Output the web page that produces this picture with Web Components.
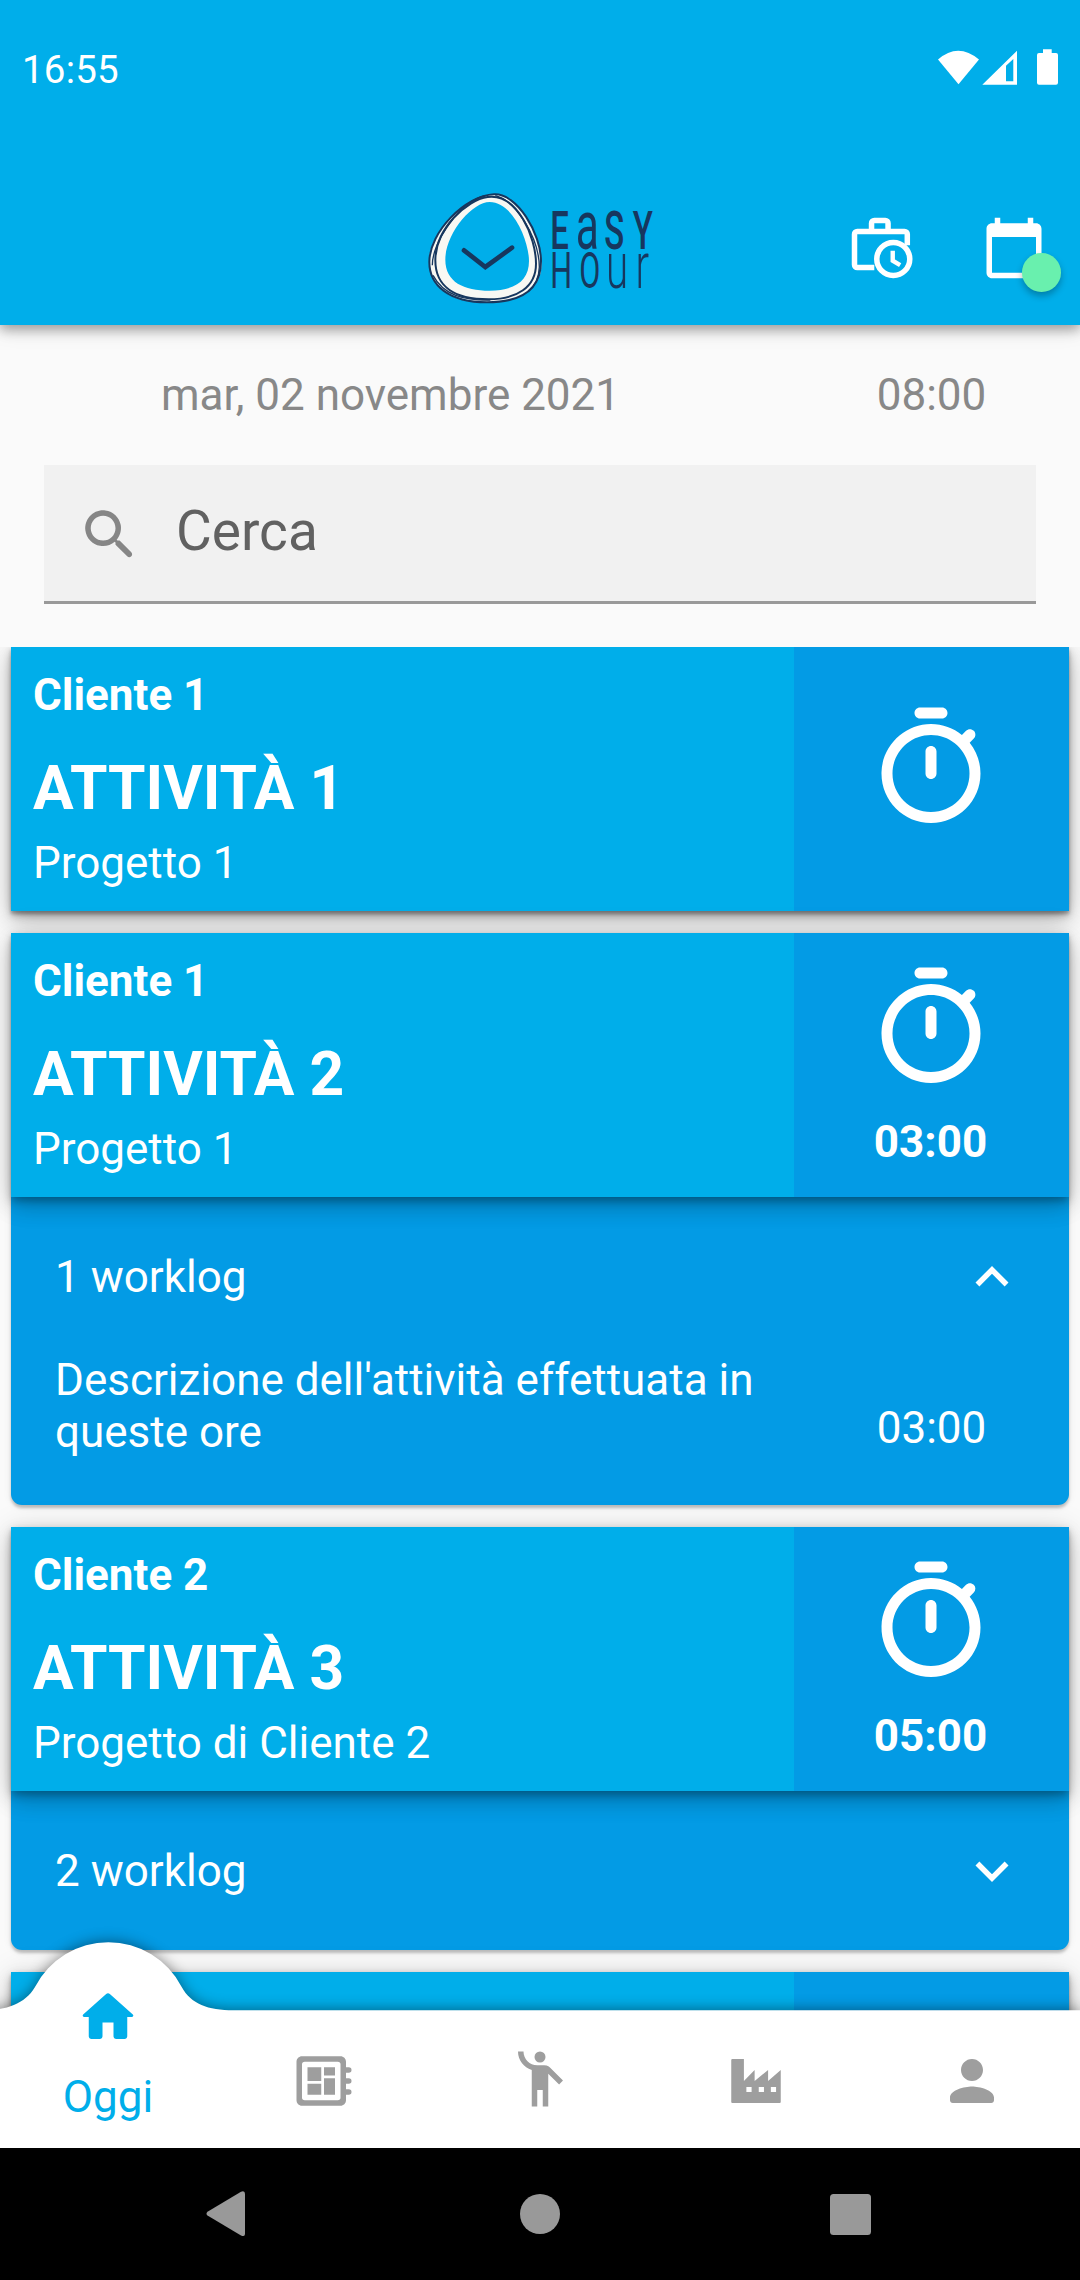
<!DOCTYPE html>
<html lang="it">
<head>
<meta charset="utf-8">
<title>EasyHour</title>
<style>
html,body{margin:0;padding:0}
body{width:1080px;height:2280px;overflow:hidden;background:#fafafa;font-family:Roboto,"Liberation Sans",sans-serif;font-size:44px;line-height:52px}
</style>
</head>
<body>
<easy-app></easy-app>
<script>
const ICONS = {
  timer: '<path d="M14 1h-4c-.55 0-1 .45-1 1s.45 1 1 1h4c.55 0 1-.45 1-1s-.45-1-1-1zm-2 13c.55 0 1-.45 1-1V9c0-.55-.45-1-1-1s-1 .45-1 1v4c0 .55.45 1 1 1zm7.03-6.61l.75-.75c.38-.38.39-1.01 0-1.4l-.01-.01c-.39-.39-1.01-.38-1.4 0l-.75.75C16.07 4.74 14.12 4 12 4c-4.8 0-8.88 3.96-9 8.76C2.87 17.84 6.94 22 12 22c4.98 0 9-4.03 9-9 0-2.12-.74-4.07-1.97-5.61zM12 20c-3.87 0-7-3.13-7-7s3.13-7 7-7 7 3.13 7 7-3.13 7-7 7z"/>',
  search: '<path d="M15.5 14h-.79l-.28-.27c1.2-1.4 1.82-3.31 1.48-5.34-.47-2.78-2.79-5-5.59-5.34-4.23-.52-7.79 3.04-7.27 7.27.34 2.8 2.56 5.12 5.34 5.59 2.03.34 3.94-.28 5.34-1.48l.27.28v.79l4.25 4.25c.41.41 1.08.41 1.49 0 .41-.41.41-1.08 0-1.49L15.5 14zm-6 0C7.01 14 5 11.99 5 9.5S7.01 5 9.5 5 14 7.01 14 9.5 11.99 14 9.5 14z"/>',
  up: '<path d="M12 8l-6 6 1.41 1.41L12 10.83l4.59 4.58L18 14z"/>',
  down: '<path d="M16.59 8.59L12 13.17 7.41 8.59 6 10l6 6 6-6z"/>',
  briefcase: '<path fill="none" stroke="currentColor" stroke-width="2" d="M9.2 19.1H3a1 1 0 0 1-1-1V7a1 1 0 0 1 1-1h17.2a1 1 0 0 1 1 1v4M8.2 6V3a1 1 0 0 1 1-1H13.2a1 1 0 0 1 1 1V6"/><circle cx="16.1" cy="16" r="6" fill="none" stroke="currentColor" stroke-width="2"/><path fill="none" stroke="currentColor" stroke-width="1.6" d="M15.9 13v3.6l2.7 1.6"/>',
  calendar: '<path d="M20 3h-1V1h-2v2H7V1H5v2H4c-1.1 0-2 .9-2 2v16c0 1.1.9 2 2 2h16c1.1 0 2-.9 2-2V5c0-1.1-.9-2-2-2zm0 18H4V8h16v13z"/>',
  home: '<path d="M10 19v-5h4v5c0 .55.45 1 1 1h3c.55 0 1-.45 1-1v-7h1.7c.46 0 .68-.57.33-.87L12.67 3.6c-.38-.34-.96-.34-1.34 0l-8.36 7.53c-.34.3-.13.87.33.87H5v7c0 .55.45 1 1 1h3c.55 0 1-.45 1-1z"/>',
  board: '<path fill-rule="evenodd" d="M4 3h14c1.1 0 2 .9 2 2v2h1a1 1 0 0 1 0 2h-1v2h1a1 1 0 0 1 0 2h-1v2h1a1 1 0 0 1 0 2h-1v2c0 1.1-.9 2-2 2H4c-1.1 0-2-.9-2-2V5c0-1.1.9-2 2-2zM5 5a1 1 0 0 0-1 1v12a1 1 0 0 0 1 1h12a1 1 0 0 0 1-1V6a1 1 0 0 0-1-1z"/><path d="M6 7h5v5H6zM6 13h5v4H6zM12 7h4v3h-4zM12 11h4v6h-4z"/>',
  people: '<circle cx="12" cy="4" r="2"/><path d="M15.89 8.11C15.5 7.72 14.83 7 13.53 7h-2.54C8.24 6.99 6 4.75 6 2H4c0 3.16 2.11 5.84 5 6.71V22h2v-6h2v6h2V10.05L18.95 14l1.41-1.41z"/>',
  factory: '<path fill-rule="evenodd" d="M3.4 4h4.2v8l3.9-4v4l4.9-4v4L21 8v11.6a.4.4 0 0 1-.4.4H3.4a.4.4 0 0 1-.4-.4V4.4a.4.4 0 0 1 .4-.4zM8.5 14.2v1.8h1.9v-1.8zM13 14.2v1.8h1.9v-1.8zM17.4 14.2v1.8h1.9v-1.8z"/>',
  person: '<path d="M12 12c2.21 0 4-1.79 4-4s-1.79-4-4-4-4 1.79-4 4 1.79 4 4 4zm0 2c-2.67 0-8 1.34-8 4v1c0 .55.45 1 1 1h14c.55 0 1-.45 1-1v-1c0-2.66-5.33-4-8-4z"/>'
};

function define(name, render) {
  customElements.define(name, class extends HTMLElement {
    connectedCallback() {
      if (this.shadowRoot) return;
      const t = document.createElement('template');
      t.innerHTML = render(this);
      this.attachShadow({mode: 'open'}).appendChild(t.content.cloneNode(true));
    }
  });
}

define('md-icon', el => `<style>:host{display:block;flex:none;width:${el.getAttribute('size') || 66}px;height:${el.getAttribute('size') || 66}px}svg{display:block}</style>
<svg width="100%" height="100%" viewBox="0 0 24 24" fill="currentColor">${ICONS[el.getAttribute('name')]}</svg>`);

define('status-bar', () => `<style>
:host{display:flex;height:138px;box-sizing:border-box;padding:44px 22px 0 22px;color:#fff;font-size:38.5px;line-height:52px;justify-content:space-between}
span{letter-spacing:.2px}svg{display:block;margin-top:4px}</style>
<span>16:55</span>
<svg width="122" height="38" viewBox="0 0 122 38" fill="#fff">
<path d="M2 11.5Q22 -6 43 11.5L22.5 36.3z"/>
<path fill-rule="evenodd" d="M46.3 36.7L81 2.7v34zM70 17.8v15.5h7.3V11z"/>
<path d="M107 1.3h8.7V5h4.3a2 2 0 0 1 2 2v27.7a2 2 0 0 1-2 2h-17a2 2 0 0 1-2-2V7a2 2 0 0 1 2-2h4z"/>
</svg>`);

define('easy-logo', () => `<style>:host{display:block;width:228px;height:114px}svg{display:block;overflow:visible}text{font-family:Roboto,sans-serif;fill:#17375e}</style>
<svg width="228" height="114" viewBox="80 62 684 342">
<path fill="#f8f8f3" fill-rule="evenodd" d="M278 71C350 66 424 192 424 278C424 350 372 397 255 397C145 397 86 345 86 272C86 185 200 76 278 71zM268 95C215 95 135 190 135 268C135 335 190 361 268 361C345 361 386 330 386 272C386 215 340 95 268 95z"/>
<g fill="none" stroke="#17375e">
<path stroke-width="6" d="M281 72C350 68 422 190 422 272C422 345 378 396 260 396C145 396 87 345 87 275C87 185 195 76 281 72z"/>
<path stroke-width="6" d="M262 80C350 68 407 200 407 280C407 350 350 387 265 387C165 387 105 350 105 270C105 175 200 88 262 80z"/>
<path stroke-width="4" d="M285 76C345 90 416 200 417 290C416 325 402 348 385 362M96 285C95 215 180 90 255 76M98 315C130 375 190 390 270 389"/>
<path stroke-width="14" stroke-linecap="round" d="M191 240L255 290L335 232"/>
</g>
<g transform="scale(.62 1)">
<text y="235" font-size="159" font-weight="500"><tspan x="726">E</tspan><tspan x="849" font-size="206" font-weight="400">a</tspan><tspan x="987">S</tspan><tspan x="1125">Y</tspan></text>
<text y="352" font-size="148" font-weight="400"><tspan x="726">H</tspan><tspan x="866">O</tspan><tspan x="995" font-size="195" font-weight="300">u</tspan><tspan x="1138" font-size="195" font-weight="300">r</tspan></text>
</g>
</svg>`);

define('app-header', () => `<style>
:host{display:block;position:relative;z-index:2;height:325px;background:#00aeea;box-shadow:0 5px 11px rgba(0,0,0,.3),0 2px 22px rgba(0,0,0,.14)}
.bar{display:flex;height:154px;align-items:center;margin-top:33px;padding-left:427px;color:#fff}
.work{margin-left:193.5px}.cal{position:relative;margin-left:66px}
.dot{position:absolute;left:41.5px;top:38px;width:38.5px;height:38.5px;border-radius:50%;background:#69f0ae;box-shadow:0 4px 7px rgba(0,0,0,.28)}</style>
<status-bar></status-bar>
<div class="bar"><easy-logo></easy-logo><md-icon class="work" name="briefcase"></md-icon><div class="cal"><md-icon name="calendar"></md-icon><div class="dot"></div></div></div>`);

define('day-row', () => `<style>:host{display:flex;height:140px;align-items:center;color:#888}
.d{width:781px;text-align:center;margin-right:13px}.t{width:275px;text-align:center}</style>
<div class="d"><slot name="date"></slot></div><div class="t"><slot name="time"></slot></div>`);

define('search-field', () => `<style>:host{display:flex;box-sizing:border-box;height:139px;margin:0 44px;padding:4px 33px 0;align-items:center;gap:33px;background:#f1f1f1;border-bottom:3px solid #999;color:#868686}
span{font-size:55px;line-height:64px;color:#616161;padding-bottom:8px}</style>
<md-icon name="search"></md-icon><span><slot></slot></span>`);

define('activity-card', el => `<style>
:host{display:block;margin:0 11px;color:#fff}
.panel{background:#039be5;box-shadow:0 3px 3px rgba(0,0,0,.22),0 1px 8px rgba(0,0,0,.08)}
:host(.log) .panel{border-radius:0 0 11px 11px}
.head{display:flex;position:relative;height:264px;background:#00aeea;box-shadow:0 5px 8px -1px rgba(0,0,0,.28),0 10px 20px rgba(0,0,0,.16),0 3px 30px rgba(0,0,0,.14)}
.info{flex:1;display:flex;flex-direction:column;padding:22px}
b{display:block;font-weight:700}
.title{font-size:60.5px;line-height:71px;margin:32px 0 13px}
.timer{width:275px;box-sizing:border-box;padding-right:2px;background:#039be5;display:flex;flex-direction:column;align-items:center;justify-content:center}
.timer b{margin-top:22px}</style>
<div class="panel"><div class="head"><div class="info"><b><slot name="client"></slot></b><b class="title"><slot name="title"></slot></b><span><slot name="project"></slot></span></div>
<div class="timer"><md-icon name="timer" size="132"></md-icon><b>${el.getAttribute('time') || ''}</b></div></div><slot></slot></div>`);

define('worklog-list', el => `<style>
:host{display:block}
.h{display:flex;height:159px;padding:0 44px;align-items:center;justify-content:space-between}</style>
<div class="h"><span>${el.getAttribute('label')}</span><md-icon name="${el.hasAttribute('open') ? 'up' : 'down'}"></md-icon></div><slot></slot>`);

define('worklog-entry', el => `<style>
:host{display:flex;height:149px;box-sizing:border-box;padding:0 0 47px 44px;align-items:flex-end}
.t{flex:1}.d{width:275px;text-align:center;padding-bottom:4px}</style>
<div class="t"><slot></slot></div><div class="d">${el.getAttribute('time')}</div>`);

define('tab-bar', () => `<style>
:host{display:block;position:absolute;left:0;right:0;top:1920px;height:228px}
.bg{position:absolute;left:0;top:0;overflow:visible;filter:drop-shadow(0 -1px 7px rgba(0,0,0,.42))}
.tabs{position:relative;display:flex;height:228px;color:#9e9e9e}
.tabs>*{flex:1;display:flex;flex-direction:column;align-items:center;box-sizing:border-box;padding-top:128px}
.tabs>.on{padding-top:64px;color:#00aeea}.on span{margin-top:21px}
.tabs>.ppl{padding-top:126px}</style>
<svg class="bg" width="1080" height="228" viewBox="0 0 1080 228"><path fill="#fff" d="M-17 90.3C6 90.3 25 84 35 67A82.5 82.5 0 0 1 181.7 67C191 84 208 90.3 233.5 90.3H1080V228H-17z"/></svg>
<div class="tabs"><div class="on"><md-icon name="home"></md-icon><span>Oggi</span></div><div><md-icon name="board"></md-icon></div><div class="ppl"><md-icon name="people"></md-icon></div><div><md-icon name="factory"></md-icon></div><div><md-icon name="person"></md-icon></div></div>`);

define('system-nav', () => `<style>
:host{display:flex;position:absolute;left:0;right:0;top:2148px;height:132px;background:#000;align-items:center;padding-left:206px;box-sizing:border-box}svg{display:block}
.c{margin-left:274px}.s{margin-left:270px}</style>
<svg width="40" height="46" viewBox="0 0 40 46" fill="#999"><path d="M1.5 20.7L35 .8Q39 -.8 39 3v40Q39 46 35 44.4L1.5 24.6Q-.5 22.6 1.5 20.7z"/></svg>
<svg class="c" width="40" height="40" fill="#999"><circle cx="20" cy="20" r="20"/></svg>
<svg class="s" width="41" height="41" fill="#999"><rect width="41" height="41" rx="3.5"/></svg>`);

define('easy-app', () => `<style>
:host{display:block;position:relative;width:1080px;height:2280px;overflow:hidden;background:#fafafa}
.list{display:flex;flex-direction:column;gap:22px;margin-top:43px;height:1501px;overflow:hidden}
activity-card{flex:none}</style>
<app-header></app-header>
<day-row><span slot="date">mar, 02 novembre 2021</span><span slot="time">08:00</span></day-row>
<search-field>Cerca</search-field>
<div class="list">
<activity-card><span slot="client">Cliente 1</span><span slot="title">ATTIVITÀ 1</span><span slot="project">Progetto 1</span></activity-card>
<activity-card class="log" time="03:00"><span slot="client">Cliente 1</span><span slot="title">ATTIVITÀ 2</span><span slot="project">Progetto 1</span>
<worklog-list label="1 worklog" open><worklog-entry time="03:00">Descrizione dell'attività effettuata in queste ore</worklog-entry></worklog-list></activity-card>
<activity-card class="log" time="05:00"><span slot="client">Cliente 2</span><span slot="title">ATTIVITÀ 3</span><span slot="project">Progetto di Cliente 2</span><worklog-list label="2 worklog"></worklog-list></activity-card>
<activity-card></activity-card>
</div>
<tab-bar></tab-bar><system-nav></system-nav>`);
</script>
</body>
</html>
